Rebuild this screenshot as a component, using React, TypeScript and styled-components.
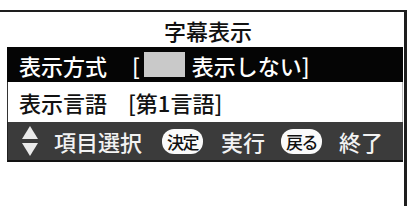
import React from "react";
import styled, { createGlobalStyle } from "styled-components";

const Global = createGlobalStyle`
  html, body { margin: 0; padding: 0; background: #fff; }
  body { font-family: "Noto Sans CJK JP", "Noto Sans", sans-serif; }
`;

const Frame = styled.div`
  margin-top: 10px;
  width: 404px;
  height: 194px;
  border-top: 2px solid #1e1e1e;
  border-right: 3px solid #1e1e1e;
  display: flex;
  flex-direction: column;
`;

const Title = styled.div`
  height: 35px;
  display: flex;
  align-items: center;
  justify-content: center;
  padding-left: 12px;
  font-size: 22px;
  font-weight: 500;
  color: #111;
  line-height: 1;
`;

const Panel = styled.div`
  margin-left: 7px;
  margin-right: 1px;
  display: flex;
  flex-direction: column;
`;

const Row = styled.div<{ $selected?: boolean }>`
  height: ${(p) => (p.$selected ? 35 : 40)}px;
  display: flex;
  align-items: center;
  padding-left: 11px;
  font-size: 22px;
  font-weight: 500;
  line-height: 1;
  background: ${(p) => (p.$selected ? "#050505" : "#fff")};
  color: ${(p) => (p.$selected ? "#fff" : "#111")};
  border-left: 1px solid ${(p) => (p.$selected ? "#050505" : "#333")};
  border-right: 1px solid ${(p) => (p.$selected ? "#050505" : "#bbb")};
`;

const Bracket = styled.span<{ $ml: number }>`
  margin-left: ${(p) => p.$ml}px;
`;

const Swatch = styled.span`
  display: inline-block;
  width: 41px;
  height: 25px;
  background: #c9c9c9;
  margin-left: 4px;
  margin-right: 7px;
`;

const Bar = styled.div`
  height: 38px;
  background: #3b3b3b;
  border-bottom: 2px solid #121212;
  border-left: 1px solid #222;
  display: flex;
  align-items: center;
  padding-left: 14px;
  color: #f2f2f2;
  font-size: 22px;
  font-weight: 500;
  line-height: 1;
`;

const Label = styled.span<{ $ml: number }>`
  margin-left: ${(p) => p.$ml}px;
`;

const Pill = styled.span<{ $ml: number }>`
  margin-left: ${(p) => p.$ml}px;
  width: 41px;
  height: 25px;
  border-radius: 12px;
  background: #fafafa;
  color: #111;
  font-size: 17px;
  font-weight: 500;
  display: inline-flex;
  align-items: center;
  justify-content: center;
  letter-spacing: -1.5px;
`;

const Arrows = () => (
  <svg width="16" height="30" viewBox="0 0 16 30">
    <polygon points="8,0 16,13 0,13" fill="#eaeaea" />
    <polygon points="0,17 16,17 8,30" fill="#eaeaea" />
  </svg>
);

export default function App() {
  return (
    <>
      <Global />
      <Frame>
        <Title>字幕表示</Title>
        <Panel>
          <Row $selected>
            表示方式
            <Bracket $ml={25}>[</Bracket>
            <Swatch />
            表示しない]
          </Row>
          <Row>
            表示言語
            <Bracket $ml={21}>[第1言語]</Bracket>
          </Row>
          <Bar>
            <Arrows />
            <Label $ml={16}>項目選択</Label>
            <Pill $ml={20}>決定</Pill>
            <Label $ml={18}>実行</Label>
            <Pill $ml={16}>戻る</Pill>
            <Label $ml={17}>終了</Label>
          </Bar>
        </Panel>
      </Frame>
    </>
  );
}
